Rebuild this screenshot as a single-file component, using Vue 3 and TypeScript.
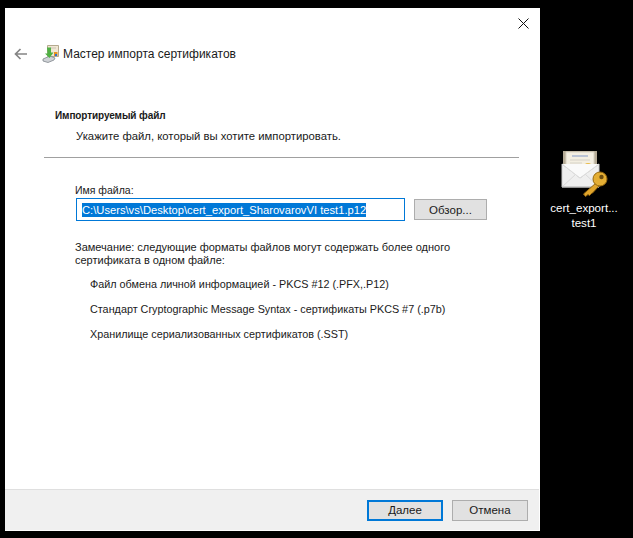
<script setup lang="ts">
const formats: string[] = [
  'Файл обмена личной информацией - PKCS #12 (.PFX,.P12)',
  'Стандарт Cryptographic Message Syntax - сертификаты PKCS #7 (.p7b)',
  'Хранилище сериализованных сертификатов (.SST)',
]
</script>

<template>
  <div class="desktop">
    <div class="dialog">
      <div class="titlebar">
        <svg class="close" width="11" height="11" viewBox="0 0 11 11">
          <path d="M.5.5l10 10M10.5.5l-10 10" stroke="#111" stroke-width="1" fill="none" />
        </svg>
      </div>
      <div class="nav">
        <svg class="back" width="13" height="12" viewBox="0 0 13 12">
          <path d="M13 6H1.500M6.500 1L1.500 6l5 5" stroke="#858585" stroke-width="1.700" fill="none" />
        </svg>
        <svg class="wizard" width="17" height="18" viewBox="0 0 17 18">
          <path d="M5.500.5h11v11h-11z" fill="#f1e7d3" stroke="#b5a98f" stroke-width="1" />
          <path d="M8 3h6" stroke="#c9c3b5" stroke-width="1" />
          <path d="M12 7h3.500v4H12z" fill="#e8921c" />
          <path d="M13 9h2v2h-2z" fill="#2f6fd0" />
          <path d="M1 14l7-3 5 2-1 2-6 2.500-5-1.500z" fill="#cfd2d6" stroke="#7f858c" stroke-width=".8" />
          <path d="M5 2.500h4v5h2.500l-4 5.500-4.500-4.500h2.500z" fill="#4fb043" />
        </svg>
        <span class="title">Мастер импорта сертификатов</span>
      </div>
      <div class="head">
        <div class="heading">Импортируемый файл</div>
        <div class="sub">Укажите файл, который вы хотите импортировать.</div>
      </div>
      <div class="rule"></div>
      <div class="body">
        <div class="label">Имя файла:</div>
        <div class="file-row">
          <div class="input"><span class="selected">C:\Users\vs\Desktop\cert_export_SharovarovVI test1.p12</span></div>
          <button class="btn browse">Обзор...</button>
        </div>
        <div class="note">Замечание: следующие форматы файлов могут содержать более одного<br />сертификата в одном файле:</div>
        <div class="list">
          <div v-for="item in formats" :key="item" class="item">{{ item }}</div>
        </div>
      </div>
      <div class="footer">
        <button class="btn primary">Далее</button>
        <button class="btn">Отмена</button>
      </div>
    </div>
    <div class="desk-icon">
      <svg width="50" height="50" viewBox="0 0 50 50">
        <path d="M4 3h34v20H4z" fill="#b5ab96" />
        <path d="M7 4h28v24H7z" fill="#f4efe2" stroke="#d8d2c2" stroke-width="1" />
        <path d="M13 8h16" stroke="#a9b6d0" stroke-width="1.500" />
        <path d="M11 12h20M11 15h12" stroke="#d5d2c8" stroke-width="1" />
        <circle cx="29" cy="20" r="5" fill="#e9bb48" />
        <path d="M3 16l18 14 19-14v23H3z" fill="#efefef" stroke="#cdcdcd" stroke-width="1" />
        <path d="M3 39l14-13M40 39L26 26" stroke="#d9d9d9" stroke-width="1" fill="none" />
        <path d="M3 39h37" stroke="#bdbdbd" stroke-width="1" />
        <path d="M3 16l18 14 19-14" fill="#fafafa" stroke="#dcdcdc" stroke-width="1" />
        <path d="M37 35L24.500 46l2 2.500 2.500-2 1.500 1 2-2 1-.5 7-7.500z" fill="#e0a52c" stroke="#96680f" stroke-width="1" />
        <circle cx="41" cy="31" r="7" fill="#e4ae34" stroke="#96680f" stroke-width="1" />
        <circle cx="42.500" cy="29" r="2.200" fill="#6d4d10" />
      </svg>
      <div class="desk-label">cert_export...<br />test1</div>
    </div>
  </div>
</template>

<style>
html, body { margin: 0; background: #000; }
</style>

<style scoped>
.desktop {
  width: 633px;
  height: 538px;
  background: #000;
  box-sizing: border-box;
  padding: 8px 0 0 5px;
  display: flex;
  align-items: flex-start;
  font-family: "Liberation Sans", Arial, sans-serif;
  font-size: 11px;
  color: #1a1a1a;
  overflow: hidden;
}
.dialog {
  width: 535px;
  height: 523px;
  background: #fff;
  display: flex;
  flex-direction: column;
  flex: none;
}
.titlebar {
  height: 30px;
  display: flex;
  justify-content: flex-end;
  align-items: flex-start;
}
.close { margin: 10px 11px 0 0; }
.nav {
  height: 32px;
  display: flex;
  align-items: center;
  padding-left: 9px;
}
.wizard { margin-left: 15px; }
.title { margin-left: 4px; font-size: 12px; }
.head { margin-top: 38px; padding-left: 50px; }
.heading { font-weight: 700; font-size: 10px; letter-spacing: -.1px; line-height: 16px; }
.sub { padding-left: 21px; line-height: 18px; margin-top: 3px; font-size: 11.300px; }
.rule { height: 1px; background: #a0a0a0; margin: 12px 21px 0 39px; }
.body { padding: 24px 0 0 70px; flex: 1; }
.label { line-height: 16px; font-size: 10.500px; }
.file-row { display: flex; align-items: center; margin-top: 0; }
.input {
  box-sizing: border-box;
  width: 329px;
  height: 23px;
  margin-left: 1px;
  border: 1px solid #0078d7;
  padding: 0 0 0 5px;
  display: flex;
  align-items: center;
  white-space: nowrap;
}
.selected { background: #0078d7; color: #fff; line-height: 14px; font-size: 11.200px; }
.btn {
  box-sizing: border-box;
  font: inherit;
  font-size: 11.500px;
  color: inherit;
  background: #e1e1e1;
  border: 1px solid #adadad;
  padding: 0;
  height: 21px;
  width: 76px;
}
.browse { margin-left: 9px; width: 73px; }
.note { margin-top: 20px; line-height: 13px; }
.list { padding: 9px 0 0 15px; display: flex; flex-direction: column; gap: 9px; }
.item { line-height: 16px; font-size: 10.800px; }
.footer {
  box-sizing: border-box;
  height: 41px;
  margin-right: 1px;
  background: #f0f0f0;
  border-top: 1px solid #dfdfdf;
  display: flex;
  justify-content: flex-end;
  align-items: center;
  gap: 9px;
  padding-right: 11px;
  margin-bottom: 1px;
}
.primary { border: 2px solid #0078d7; }
.desk-icon {
  width: 76px;
  margin: 140px 0 0 6px;
  display: flex;
  flex-direction: column;
  align-items: center;
  flex: none;
  color: #fff;
}
.desk-label { text-align: center; line-height: 15px; margin-top: 2px; font-size: 11.600px; }
</style>
